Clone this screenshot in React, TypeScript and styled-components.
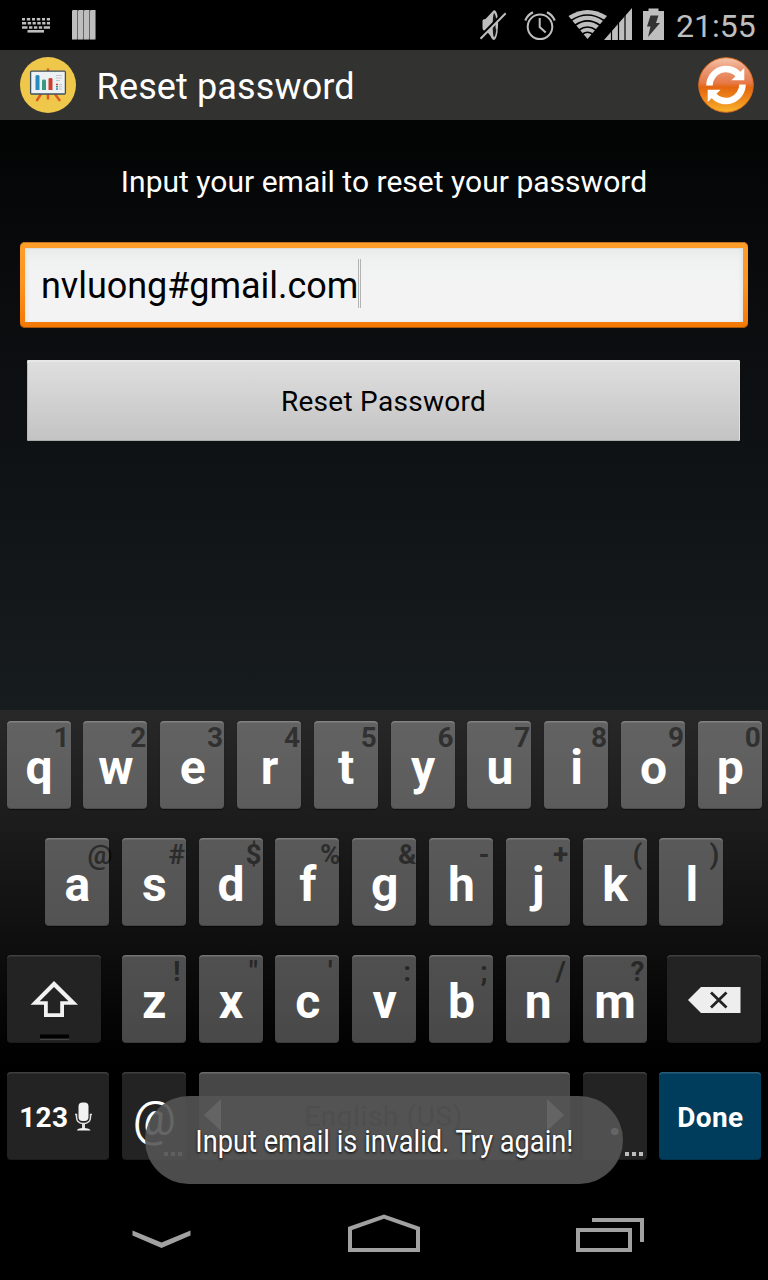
import React from 'react';
import styled, { createGlobalStyle } from 'styled-components';

const GlobalStyle = createGlobalStyle`
  * { box-sizing: border-box; }
  body { margin: 0; background: #000; font-family: Roboto, "Noto Sans", sans-serif; }
  svg { display: block; flex: none; }
`;

const Screen = styled.div`
  width: 768px;
  height: 1280px;
  display: flex;
  flex-direction: column;
  position: relative;
  overflow: hidden;
  background: #000;
  white-space: nowrap;
`;

const StatusBar = styled.header`
  height: 50px;
  display: flex;
  justify-content: space-between;
  background: #000;
  padding: 0 10px 0 20px;
`;

const StatusGroup = styled.div`
  display: flex;
  gap: 20px;
`;

const ClockGroup = styled(StatusGroup)`
  gap: 10px;
`;

const Clock = styled.span`
  width: 82px;
  font-size: 32px;
  line-height: 52px;
  color: #bebebe;
`;

const TitleBar = styled.div`
  height: 70px;
  display: flex;
  align-items: center;
  justify-content: space-between;
  padding: 0 14px 0 20px;
  background: #323230;
`;

const TitleGroup = styled.div`
  display: flex;
  align-items: center;
  gap: 20.6px;
`;

const Title = styled.h1`
  margin: 0;
  padding-top: 4px;
  font-size: 36px;
  font-weight: 400;
  line-height: 66px;
  color: #fff;
  letter-spacing: 0.13px;
`;

const Content = styled.main`
  height: 590px;
  padding: 40px 20px 0;
  display: flex;
  flex-direction: column;
  background: linear-gradient(#020404 0%, #0b0d0f 35%, #171c1f 100%);
`;

const Prompt = styled.p`
  margin: 0;
  font-size: 30px;
  line-height: 43px;
  text-align: center;
  color: #fff;
  letter-spacing: 0.02px;
`;

const FieldFrame = styled.div`
  margin-top: 39px;
  height: 86px;
  padding: 6px 5px;
  border-radius: 5px;
  background: linear-gradient(#ff9e2a 0%, #fb9320 50%, #f37804 100%);
  box-shadow: inset 0 1px 0 #c07520, inset 0 -1px 0 #a85405;
`;

const Field = styled.div`
  height: 74px;
  padding-left: 16px;
  display: flex;
  background: linear-gradient(#e9ebea 0, #f0f2f1 14px, #f3f3f3 34px, #f3f3f3 100%);
  box-shadow: inset 3px 0 4px -2px #dcdfe0, inset -3px 0 4px -2px #dcdfe0, inset 0 1px 0 #dddfde;
  color: #000;
  font-size: 36px;
  line-height: 77px;
`;

const FieldText = styled.span`
  letter-spacing: -0.05px;
`;

const Caret = styled.span`
  width: 3px;
  height: 49px;
  margin-top: 11px;
  border: solid #b3b3b3;
  border-width: 0 1px;
`;

const ResetButton = styled.div`
  margin: 32px 8px 0 7px;
  height: 81px;
  border-radius: 2px;
  text-align: center;
  font-size: 28px;
  line-height: 83px;
  letter-spacing: 0.28px;
  color: #000;
  background: linear-gradient(#dfdfdf, #c3c3c3);
  box-shadow: inset 0 2px 0 #e6e8e7, inset 1px 0 0 #b9b9b9, inset -1px 0 0 #e0e0e0, inset 0 -1px 0 #a9aba9;
`;

const Keyboard = styled.section`
  height: 474px;
  padding-top: 11px;
  display: flex;
  flex-direction: column;
  gap: 29px;
  background: linear-gradient(#282828 0, #0f0f0f 230px, #000 352px);
`;

const KeyRow = styled.div<{ $indent?: number }>`
  display: flex;
  height: 88px;
  gap: 12.8px;
  padding-left: ${(p) => p.$indent ?? 6.55}px;
`;

type Tone = 'light' | 'dark' | 'action';
const fills: Record<Tone, string> = {
  light: 'rgba(255,255,255,.28)',
  dark: '#232323',
  action: '#003c5b',
};
const edges: Record<Tone, string> = {
  light: 'rgba(255,255,255,.2)',
  dark: '#3f3f3f',
  action: '#2b5d78',
};

const Key = styled.div<{ $w?: number; $tone?: Tone; $before?: number; $after?: number }>`
  position: relative;
  flex: none;
  width: ${(p) => p.$w ?? 64}px;
  height: 88px;
  margin-left: ${(p) => p.$before ?? 0}px;
  margin-right: ${(p) => p.$after ?? 0}px;
  border-radius: 4px;
  background: ${(p) => fills[p.$tone ?? 'light']};
  box-shadow: inset 0 2px 0 -0.5px ${(p) => edges[p.$tone ?? 'light']}, inset 0 -1px 0 rgba(0,0,0,.18), 0 1px 1px rgba(0,0,0,.5);
  display: flex;
  justify-content: center;
`;

const Letter = styled.span<{ $weight?: number }>`
  font-size: 48px;
  line-height: 93px;
  padding-left: 1px;
  font-weight: ${(p) => p.$weight ?? 700};
  color: #fff;
`;

const Hint = styled.span`
  position: absolute;
  top: 0;
  left: 35px;
  width: 40px;
  display: flex;
  justify-content: center;
  font-size: 28px;
  line-height: 33px;
  font-weight: 700;
  color: rgba(0,0,0,.5);
`;

const KeyLabel = styled.span<{ $gap?: number }>`
  font-size: 28px;
  line-height: 91px;
  font-weight: 700;
  color: #fff;
  letter-spacing: 0.3px;
  margin-right: ${(p) => p.$gap ?? 0}px;
`;

const SpaceContent = styled.div`
  flex: 1;
  display: flex;
  justify-content: space-between;
  padding: 27px 6px 0 5px;
`;

const SpaceLabel = styled.span`
  font-size: 28px;
  line-height: 35px;
  letter-spacing: 0.6px;
  color: #161616;
`;

const MoreMark = styled.span<{ $dim?: boolean }>`
  position: absolute;
  right: 4px;
  bottom: 4px;
  display: flex;
  gap: 3px;
  opacity: ${(p) => (p.$dim ? 0.4 : 1)};
  i { width: 4px; height: 4px; background: #bdbdbd; }
`;

const Toast = styled.div`
  position: absolute;
  left: 145px;
  top: 1096px;
  width: 478px;
  height: 88px;
  border-radius: 44px;
  background: rgba(84,84,84,.9);
  display: flex;
  justify-content: center;
`;

const ToastText = styled.span`
  font-size: 32px;
  line-height: 90px;
  color: #fff;
  text-shadow: 0 1px 3px #000;
  transform: scaleX(0.85);
`;

const NavBar = styled.nav`
  height: 96px;
  display: flex;
  justify-content: space-between;
  padding: 24px 122px 0 132px;
`;

const More = ({ dim }: { dim?: boolean }) => (
  <MoreMark $dim={dim}><i /><i /><i /></MoreMark>
);

const KeyboardIcon = () => (
  <svg width="32" height="50" viewBox="20 0 32 50" fill="none" stroke="#bebebe">
    <path d="M22 19.2H50" strokeWidth="2.4" strokeDasharray="3 1.8 3.4 1.8 3 1.8 3.4 1.8 3 1.8 5 2" />
    <path d="M22 23.3H50" strokeWidth="2.4" strokeDasharray="4.2 1.5 3.4 1.5 3.2 1.5 3.4 1.5 3.2 1.5 5 2" />
    <path d="M22 27.5H50" strokeWidth="2.6" strokeDasharray="5.5 1.5 3.4 1.5 3.4 1.5 3.4 1.5 7 2" />
    <path d="M27.5 31.3H44" strokeWidth="2.6" />
  </svg>
);

const BarsIcon = () => (
  <svg width="24" height="50" viewBox="72 0 24 50">
    {[0, 1, 2, 3].map((i) => (
      <g key={i}>
        <path d={`M${72 + i * 6} 11l1-1h5v29l-1 1h-5z`} fill="#666" />
        <path d={`M${72 + i * 6} 11l1-1h4v28.500l-1 .5h-4z`} fill="#bebebe" />
      </g>
    ))}
  </svg>
);

const SystemIcons = () => (
  <svg width="190" height="50" viewBox="476 0 190 50">
    <g fill="#bebebe">
      <path d="M482.500 21q0-2 3-2l8-8.500q2.500-1 4 5 1.300 9 0 17-1 6.500-3.500 7.500-2 0-3.500-4l-4-5q-4 0-4-3z" />
      <path d="M494 13q1.800 1.500 2.300 7-.8 1-.8 5t.8 4.500q-.5 6-2.300 8-1.300-2-1.300-12t1.300-12.500z" fill="#161616" />
      <path d="M479 38l26-26.500" stroke="#000" strokeWidth="2.600" />
      <path d="M480.500 38.700L505.700 13.300" stroke="#bebebe" strokeWidth="2" />
    </g>
    <g fill="none" stroke="#bebebe" strokeWidth="2">
      <circle cx="540" cy="26.800" r="12.300" />
      <path d="M539.700 18v9l6 5.500" />
      <path d="M525.300 20.500A15.500 15.500 0 0 1 533 12.200M547 12.200a15.500 15.500 0 0 1 7.700 8.300" strokeWidth="2.200" />
    </g>
    <path d="M587.500 39L568.500 16Q587.500 4 607 16z" fill="#bebebe" />
    <g fill="none" stroke="#000" strokeWidth="1.700">
      <path d="M571 20.500Q587.500 9.500 604 20.500" />
      <path d="M575 25.300Q587.500 16.500 600 25.300" />
      <path d="M579 30Q587.500 24 596 30" />
      <path d="M582.500 34Q587.500 30.500 592.500 34" />
    </g>
    <path d="M604 40l28-32v32z" fill="#bebebe" />
    <path d="M611.500 26v14M618.500 18v22M625 12v28" stroke="#000" strokeWidth="1.200" />
    <path d="M643 11h5.500V8.500h10V11h5.500v29h-21z" fill="#bebebe" />
    <path d="M650.500 15.500h8l-2.500 7.500h4l-12 14 2.500-10.500h-3.500z" fill="#333" />
  </svg>
);

const AppIcon = () => (
  <svg width="56" height="70" viewBox="20 50 56 70">
    <circle cx="48" cy="85" r="28" fill="#efc74b" />
    <path d="M41 94l-4.500 7M55 94l5 7M48 94v5.500M48 71v-2.500" stroke="#dc5c25" strokeWidth="2.500" />
    <rect x="30.600" y="71.200" width="34.800" height="22.800" rx="1" fill="#edf1f3" stroke="#3d5262" strokeWidth="1.300" />
    <path d="M35.500 76q0-1 2-1t2 1v14h-4z" fill="#268cbd" />
    <path d="M42 80.500q0-1 2-1t2 1V90h-4z" fill="#379a80" />
    <path d="M48.500 79q0-1 2-1t2 1v11h-4z" fill="#ca3e2f" />
    <path d="M56 75.500h6M56 78h6M56 80.500h4M58.800 84.500H62M58.800 86.800H62M58.800 89H62" stroke="#c2c6c8" strokeWidth="1.100" />
    <path d="M56 84.500h2" stroke="#ca3e2f" strokeWidth="1.500" />
    <path d="M56 86.800h2" stroke="#379a80" strokeWidth="1.500" />
    <path d="M56 89h2" stroke="#268cbd" strokeWidth="1.500" />
  </svg>
);

const RefreshIcon = () => (
  <svg width="56" height="70" viewBox="698 50 56 70">
    <defs>
      <linearGradient id="orb" x1="0" y1="0" x2="0" y2="1">
        <stop offset="0" stopColor="#f5c4ae" />
        <stop offset=".2" stopColor="#ec9b78" />
        <stop offset=".46" stopColor="#e67a4a" />
        <stop offset=".54" stopColor="#e4660f" />
        <stop offset=".8" stopColor="#ef8f1d" />
        <stop offset="1" stopColor="#f9b52c" />
      </linearGradient>
    </defs>
    <circle cx="726" cy="85" r="27.300" fill="url(#orb)" stroke="#dd6c1c" strokeWidth="1" />
    <g fill="none" stroke="#fff" strokeWidth="6.500">
      <path d="M709.500 85.500a16.500 16.500 0 0 1 29-10.800" />
      <path d="M742.500 84.500a16.500 16.500 0 0 1-29 10.800" />
    </g>
    <path d="M744.300 68v12.300h-13zM707.700 102V89.700h13z" fill="#fff" />
  </svg>
);

const ShiftIcon = () => (
  <svg width="94" height="88" viewBox="7 955 94 88">
    <path
      d="M54 981L78 1004.700H64V1017H44V1004.700H30.500zM54 987L39.700 1001.200H47.800V1013.200H60.200V1001.200H68.500z"
      fill="#f2f2f2"
      fillRule="evenodd"
    />
    <path d="M40 1034.500h29v4H40z" fill="#000" />
    <path d="M40 1039.300h29" stroke="#4c4c4c" />
  </svg>
);

const DeleteIcon = () => (
  <svg width="94" height="88" viewBox="667 955 94 88">
    <path d="M688 1000l13-13h39.500v26H701z" fill="#eee" />
    <path d="M711 992.500l15.500 15M726.500 992.500l-15.500 15" stroke="#222" strokeWidth="2.800" />
  </svg>
);

const MicIcon = () => (
  <svg width="22" height="88" viewBox="75 1072 22 88">
    <rect x="79.500" y="1102.500" width="10" height="18.500" rx="4" fill="#f2f2f2" />
    <path d="M76 1114.500h1.500v2.500q0 6.500 7 6.500t7-6.500v-2.500H93" fill="none" stroke="#ddd" strokeWidth="1.500" />
    <path d="M84.500 1123v6" stroke="#ddd" strokeWidth="3" />
    <path d="M78 1130.500q0-2.500 6.500-2.500t7 2.500z" fill="#f2f2f2" />
  </svg>
);

const top: [string, string][] = [['q', '1'], ['w', '2'], ['e', '3'], ['r', '4'], ['t', '5'], ['y', '6'], ['u', '7'], ['i', '8'], ['o', '9'], ['p', '0']];
const home: [string, string][] = [['a', '@'], ['s', '#'], ['d', '$'], ['f', '%'], ['g', '&'], ['h', '-'], ['j', '+'], ['k', '('], ['l', ')']];
const bottom: [string, string][] = [['z', '!'], ['x', '"'], ['c', "'"], ['v', ':'], ['b', ';'], ['n', '/'], ['m', '?']];

const Letters = ({ keys }: { keys: [string, string][] }) => (
  <>
    {keys.map(([letter, hint]) => (
      <Key key={letter}>
        <Hint>{hint}</Hint>
        <Letter>{letter}</Letter>
      </Key>
    ))}
  </>
);

export default function App() {
  return (
    <Screen>
      <GlobalStyle />
      <StatusBar>
        <StatusGroup>
          <KeyboardIcon />
          <BarsIcon />
        </StatusGroup>
        <ClockGroup>
          <SystemIcons />
          <Clock>21:55</Clock>
        </ClockGroup>
      </StatusBar>
      <TitleBar>
        <TitleGroup>
          <AppIcon />
          <Title>Reset password</Title>
        </TitleGroup>
        <RefreshIcon />
      </TitleBar>
      <Content>
        <Prompt>Input your email to reset your password</Prompt>
        <FieldFrame>
          <Field>
            <FieldText>nvluong#gmail.com</FieldText>
            <Caret />
          </Field>
        </FieldFrame>
        <ResetButton>Reset Password</ResetButton>
      </Content>
      <Keyboard>
        <KeyRow><Letters keys={top} /></KeyRow>
        <KeyRow $indent={44.95}><Letters keys={home} /></KeyRow>
        <KeyRow>
          <Key $tone="dark" $w={94.4} $after={8}><ShiftIcon /></Key>
          <Letters keys={bottom} />
          <Key $tone="dark" $w={94} $before={8}><DeleteIcon /></Key>
        </KeyRow>
        <KeyRow>
          <Key $tone="dark" $w={102.4}>
            <KeyLabel $gap={6}>123</KeyLabel>
            <MicIcon />
          </Key>
          <Key $tone="dark"><Letter $weight={400}>@</Letter><More /></Key>
          <Key $w={371.2}>
            <SpaceContent>
              <svg width="17" height="32" viewBox="0 0 17 32"><path d="M17 0v32L0 16z" fill="#f4f4f4" /></svg>
              <SpaceLabel>English (US)</SpaceLabel>
              <svg width="17" height="32" viewBox="0 0 17 32"><path d="M0 0v32l17-16z" fill="#f4f4f4" /></svg>
            </SpaceContent>
            <More dim />
          </Key>
          <Key $tone="dark"><Letter>.</Letter><More /></Key>
          <Key $tone="action" $w={102}><KeyLabel>Done</KeyLabel></Key>
        </KeyRow>
      </Keyboard>
      <NavBar>
        <svg width="60" height="48" viewBox="132 1208 60 48">
          <path d="M132.500 1230.500l29 12 29-12v5l-29 12.500-29-12.500z" fill="#a1a1a1" />
        </svg>
        <svg width="72" height="48" viewBox="348 1208 72 48">
          <path d="M350 1228.500l34-12 34 12v21.500h-68z" fill="none" stroke="#a1a1a1" strokeWidth="4" />
        </svg>
        <svg width="70" height="48" viewBox="576 1208 70 48" fill="none" stroke="#a1a1a1" strokeWidth="4">
          <path d="M578 1230h52v20h-52zM592 1220h50v22" />
        </svg>
      </NavBar>
      <Toast><ToastText>Input email is invalid. Try again!</ToastText></Toast>
    </Screen>
  );
}
